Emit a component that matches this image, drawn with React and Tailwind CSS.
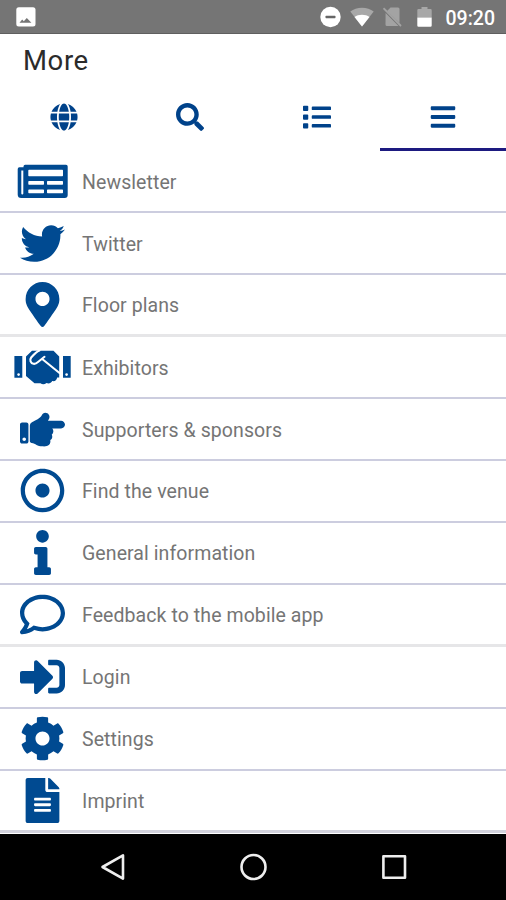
import {
  FaBars,
  FaCog,
  FaFileAlt,
  FaGlobe,
  FaHandPointRight,
  FaInfo,
  FaList,
  FaMapMarkerAlt,
  FaRegComment,
  FaRegDotCircle,
  FaSearch,
  FaSignInAlt,
  FaTwitter,
} from "react-icons/fa"

const NewspaperIcon = ({ className }) => (
  <svg className={className} viewBox="0 0 51 45" fill="currentColor">
    <path
      fillRule="evenodd"
      d="M8.200 5.700H49a1.700 1.700 0 0 1 1.700 1.700V36a3 3 0 0 1-3 3H4.200A3.500 3.500 0 0 1 0.700 35.500V10A1.700 1.700 0 0 1 2.400 8.300H6.500V7.400A1.700 1.700 0 0 1 8.200 5.700zM4.300 11.500V34.500a1 1 0 0 0 2 0V11.500zM12 10.800a.7.7 0 0 0-.7.7v5a.7.7 0 0 0 .7.7h33.300a.7.7 0 0 0 .7-.7v-5a.7.7 0 0 0-.7-.7zM12 22a.7.7 0 0 0-.7.7v2.300a.7.7 0 0 0 .7.7h14.300a.7.7 0 0 0 .7-.7v-2.300a.7.7 0 0 0-.7-.7zM30.700 22a.7.7 0 0 0-.7.7v2.300a.7.7 0 0 0 .7.7h14.600a.7.7 0 0 0 .7-.7v-2.300a.7.7 0 0 0-.7-.7zM12 30.500a.7.7 0 0 0-.7.7v2.300a.7.7 0 0 0 .7.7h14.300a.7.7 0 0 0 .7-.7v-2.300a.7.7 0 0 0-.7-.7zM30.700 30.500a.7.7 0 0 0-.7.7v2.300a.7.7 0 0 0 .7.7h14.600a.7.7 0 0 0 .7-.7v-2.300a.7.7 0 0 0-.7-.7z"
    />
  </svg>
)

const HandshakeIcon = ({ className }) => (
  <svg className={className} viewBox="0 0 57 45">
    <path d="M0.400 11H8.300V32.800H0.400zM49 11H56.700V32.800H49z" fill="currentColor" />
    <circle cx="4.600" cy="29.600" r="1.300" fill="#fff" />
    <circle cx="52.600" cy="29.600" r="1.300" fill="#fff" />
    <path
      d="M12 11.500L18 5.700H39.500L45.200 11.500V32.500H43.200C42.700 35.300 40.700 36.600 38.300 36C37 38.200 34.800 39 32.500 38C30.500 39.700 28.300 39.700 26.500 38.300H20.500L12 31z"
      fill="currentColor"
    />
    <path
      d="M25.500 5.500C22.500 6.500 19.500 9.800 17.200 12.500C15.300 15 16.600 18.200 19.500 18.800C21.300 19.100 22.600 18.300 24 17L30.500 11.800M28.200 14L45.500 28"
      fill="none"
      stroke="#fff"
      strokeWidth="2.100"
      strokeLinecap="round"
      strokeLinejoin="round"
    />
  </svg>
)

const tabs = [
  { id: "web", Icon: FaGlobe },
  { id: "search", Icon: FaSearch },
  { id: "list", Icon: FaList },
  { id: "more", Icon: FaBars },
]

const menu = [
  { label: "Newsletter", Icon: NewspaperIcon, iconWidth: "w-[51px]" },
  { label: "Twitter", Icon: FaTwitter },
  { label: "Floor plans", Icon: FaMapMarkerAlt, endOfGroup: true },
  { label: "Exhibitors", Icon: HandshakeIcon, iconWidth: "w-[57px]" },
  { label: "Supporters & sponsors", Icon: FaHandPointRight },
  { label: "Find the venue", Icon: FaRegDotCircle },
  { label: "General information", Icon: FaInfo },
  { label: "Feedback to the mobile app", Icon: FaRegComment, endOfGroup: true },
  { label: "Login", Icon: FaSignInAlt },
  { label: "Settings", Icon: FaCog },
  { label: "Imprint", Icon: FaFileAlt, endOfGroup: true },
]

const StatusBar = () => (
  <div className="flex h-[34px] items-center justify-between border-b border-[#5f5f5f] bg-[#757575] pl-4 pr-[11px] pt-px">
    <svg className="h-5 w-5" viewBox="0 0 20 20">
      <rect x="0.3" y="0.3" width="19.2" height="19.2" rx="2.5" fill="#fff" />
      <path d="M3.500 15.800l2.700-3.300 1.600 1.800 3-3.300 4.600 4.800z" fill="#757575" />
    </svg>
    <div className="flex items-center">
      {/* Do not disturb */}
      <svg className="h-[22px] w-[22px]" viewBox="0 0 22 22">
        <circle cx="10.500" cy="11" r="10.200" fill="#fff" />
        <rect x="5.500" y="9.8" width="10" height="2.4" rx="0.6" fill="#666" />
      </svg>
      {/* Wi-Fi */}
      <svg className="ml-2 h-[22px] w-6" viewBox="0 0 24 22">
        <path d="M12 20.500L0.300 5.500C3.400 3 7.500 1.700 12 1.700s8.600 1.300 11.700 3.800z" fill="#a8a8a8" />
        <path d="M12 20.500L4.500 11C6.500 9.500 9.200 8.700 12 8.700s5.500 0.800 7.500 2.300z" fill="#fff" />
      </svg>
      {/* No SIM */}
      <svg className="ml-[9px] h-[22px] w-[19px]" viewBox="0 0 19 22">
        <path d="M7.500 1.500H15a1.500 1.500 0 0 1 1.500 1.500v14L4 5zM2.600 7L15.500 20H4a1.500 1.500 0 0 1-1.500-1.500z" fill="#a3a3a3" />
        <path d="M0.500 2.200L18 20" stroke="#a3a3a3" strokeWidth="1.800" />
      </svg>
      {/* Battery */}
      <svg className="ml-[15px] h-[22px] w-[15px]" viewBox="0 0 15 22">
        <path d="M1.500 3H4.500V1h6v2h3a1.200 1.200 0 0 1 1.200 1.200V11.500H0.300V4.200A1.200 1.200 0 0 1 1.500 3z" fill="#a8a8a8" />
        <path d="M0.300 11.500h14.400v8a1.200 1.200 0 0 1-1.200 1.200h-12A1.200 1.200 0 0 1 0.300 19.500z" fill="#fff" />
      </svg>
      <span className="ml-3.5 mt-[3px] text-[19.5px] font-medium leading-none text-white">09:20</span>
    </div>
  </div>
)

const MenuRow = ({ label, Icon, iconWidth = "w-[45px]", endOfGroup }) => (
  <li
    className={`flex h-[61.95px] items-center ${
      endOfGroup ? "border-b-[3px] border-[#e6e6e8] last:border-[#d2d2dc]" : "border-b-2 border-[#cccddf]"
    }`}
  >
    <span className="flex w-[85px] shrink-0 justify-center">
      <Icon className={`h-[45px] shrink-0 text-[#004a91] ${iconWidth}`} />
    </span>
    <span className="-ml-[3px] pt-[3px] text-[19.5px] leading-6 tracking-[0.08px] text-[#757575]">{label}</span>
  </li>
)

const NavBar = () => (
  <div className="flex h-[66px] items-center justify-center gap-[113px] bg-black">
    <svg className="h-7 w-7" viewBox="0 0 28 28" fill="none" stroke="#eee" strokeWidth="2.6" strokeLinejoin="round">
      <path d="M25 2.400v23.200L4.500 14z" />
    </svg>
    <svg className="h-7 w-7" viewBox="0 0 28 28" fill="none" stroke="#eee" strokeWidth="2.6">
      <circle cx="14.500" cy="14" r="12" />
    </svg>
    <svg className="h-7 w-7" viewBox="0 0 28 28" fill="none" stroke="#eee" strokeWidth="2.6" strokeLinejoin="round">
      <rect x="3.400" y="3.200" width="21.600" height="21.600" />
    </svg>
  </div>
)

export default function App() {
  return (
    <div className="flex h-[900px] w-[506px] flex-col overflow-hidden bg-white font-['Roboto',sans-serif]">
      <StatusBar />
      <h1 className="h-[52px] pl-[23px] pt-[11px] text-[27.5px] font-normal leading-8 tracking-[0.6px] text-[#2b2b2b]">
        More
      </h1>
      <div className="grid h-[65px] grid-cols-4">
        {tabs.map(({ id, Icon }) => (
          <div
            key={id}
            className={`flex justify-center border-b-[3px] pl-px pt-[17px] ${
              id === "more" ? "border-[#1d1a80]" : "border-transparent"
            }`}
          >
            <Icon className="h-7 w-7 text-[#00428a]" />
          </div>
        ))}
      </div>
      <ul className="min-h-0 flex-1 pt-[0.3px]">
        {menu.map((item) => (
          <MenuRow key={item.label} {...item} />
        ))}
      </ul>
      <NavBar />
    </div>
  )
}
